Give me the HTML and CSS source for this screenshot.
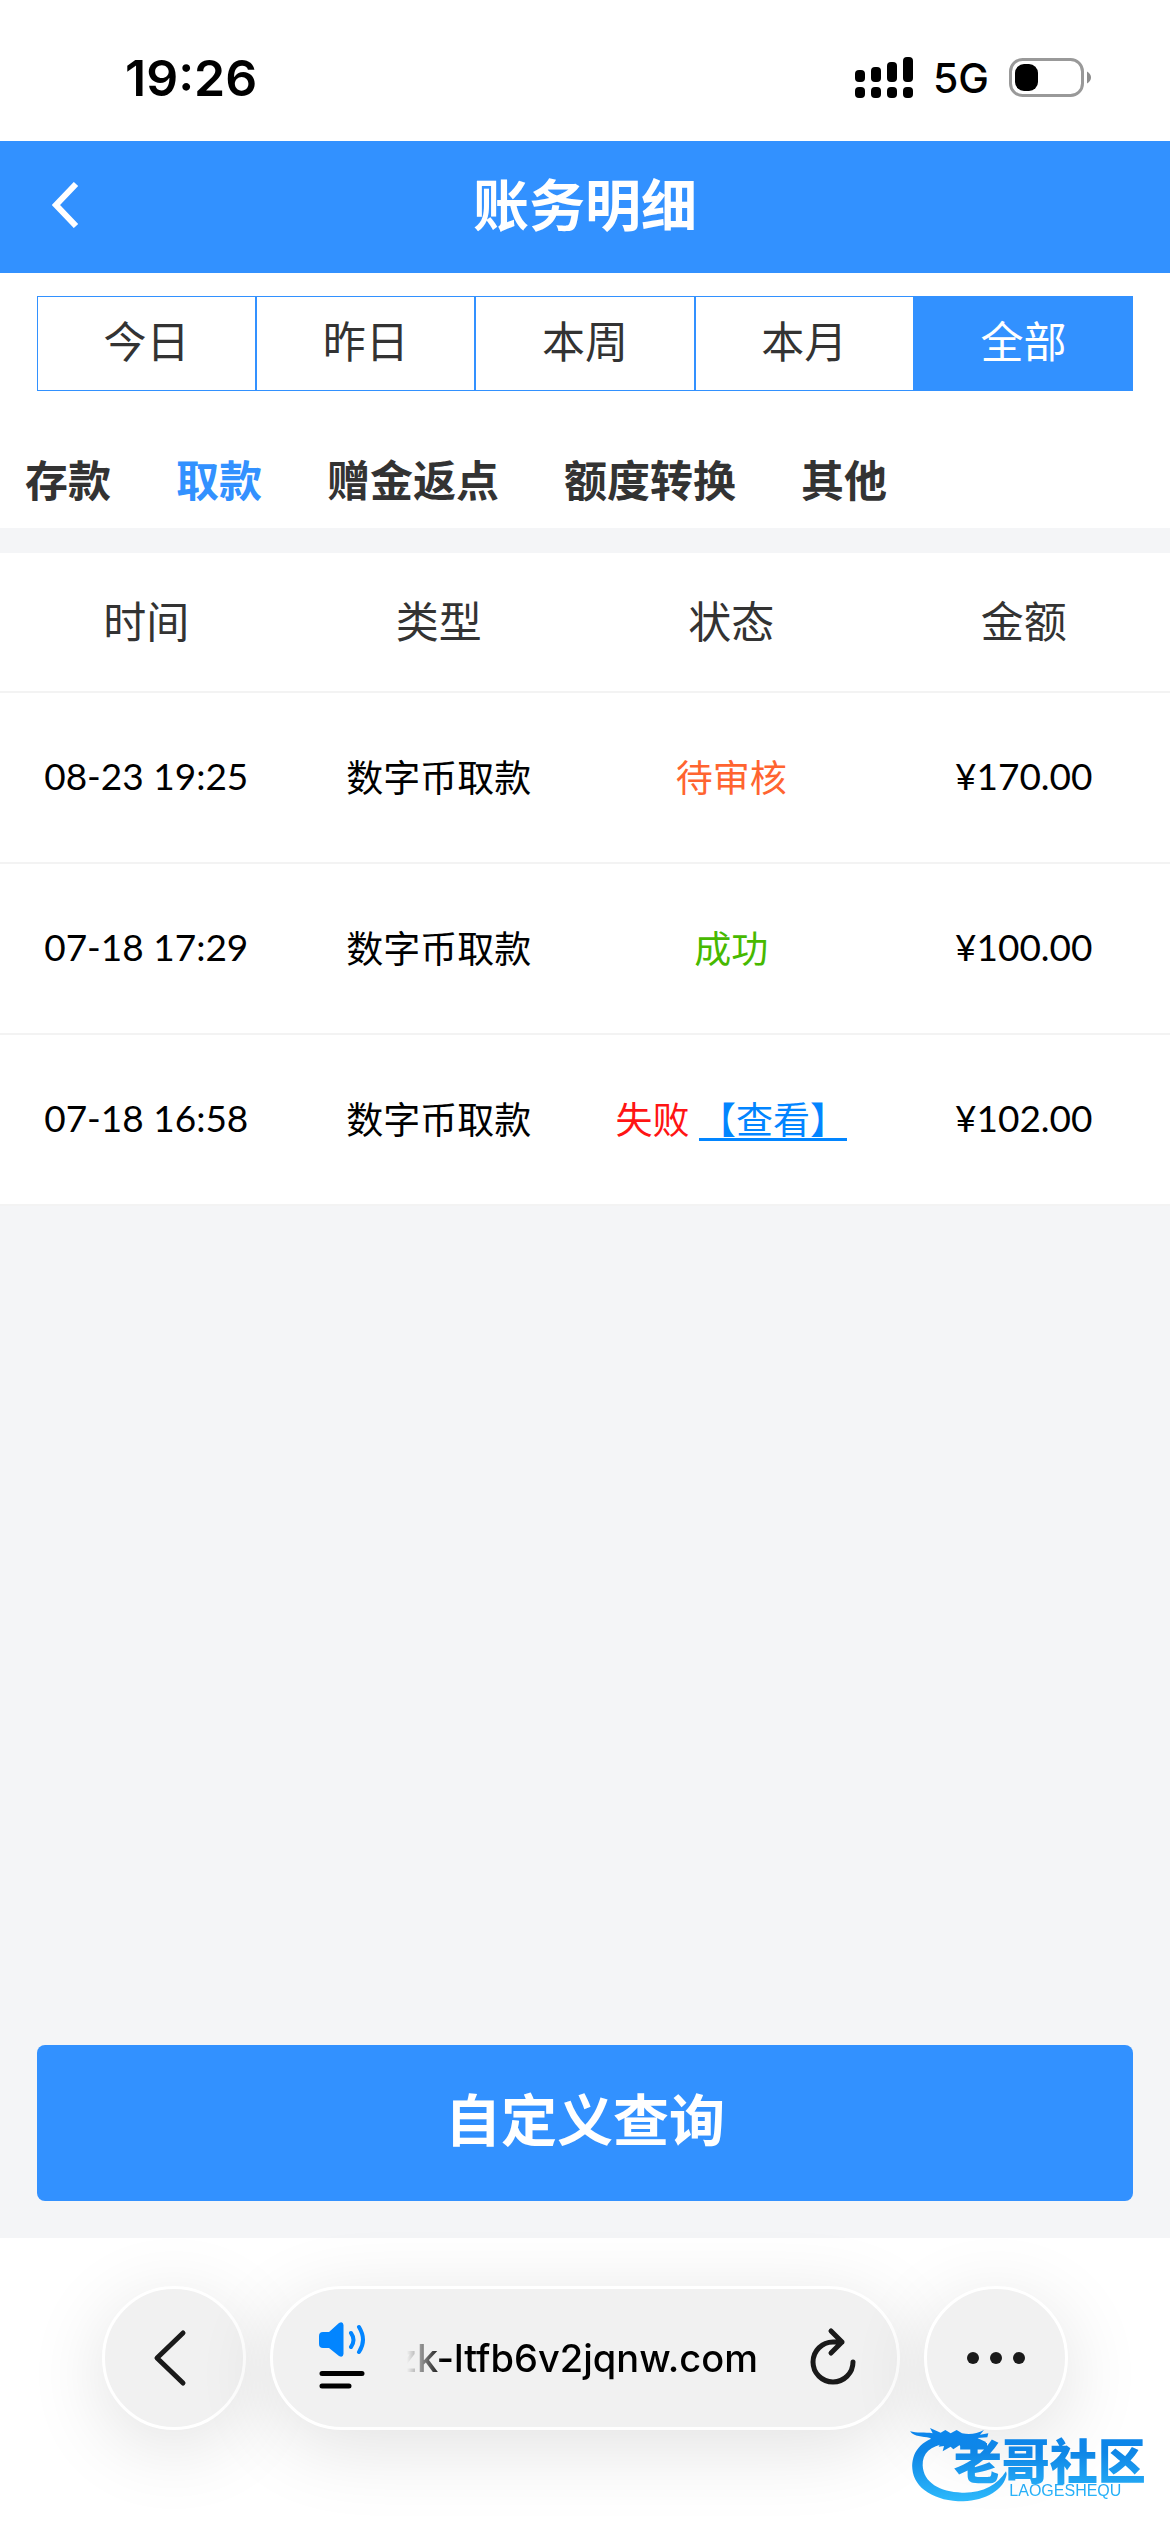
FILE: index.html
```html
<!DOCTYPE html>
<html lang="zh-CN">
<head>
  <meta charset="UTF-8" />
  <meta name="viewport" content="width=device-width, initial-scale=1.0" />
  <title>账务明细</title>
  <link rel="stylesheet" href="styles.css">
</head>
<body>
  <div class="status-bar">
    <span class="clock">19:26</span>
    <div class="status-icons">
      <svg class="signal" width="58" height="42" viewBox="0 0 58 42">
        <rect x="0" y="13" width="10" height="12" rx="4" />
        <rect x="16" y="10" width="10" height="15" rx="4" />
        <rect x="32" y="5" width="10" height="20" rx="4" />
        <rect x="48" y="0" width="10" height="25" rx="4" />
        <rect x="0" y="30" width="10" height="11" rx="4" />
        <rect x="16" y="30" width="10" height="11" rx="4" />
        <rect x="32" y="30" width="10" height="11" rx="4" />
        <rect x="48" y="30" width="10" height="11" rx="4" />
      </svg>
      <span class="network">5G</span>
      <svg class="battery" width="82" height="40" viewBox="0 0 82 40">
        <rect x="1.5" y="1.5" width="72" height="36" rx="12" fill="none" stroke="#999" stroke-width="3" />
        <rect x="6" y="6" width="23" height="27" rx="9" />
        <path d="M78 13.500 Q82 16 82 19.500 Q82 23 78 25.500 Z" fill="#8c8c8c" />
      </svg>
    </div>
  </div>

  <header class="header">
    <button class="back" aria-label="返回">
      <svg width="30" height="46" viewBox="0 0 30 46"><path d="M24 2 L4 23 L24 44" fill="none" stroke="#fff" stroke-width="6" /></svg>
    </button>
    <h1>账务明细</h1>
  </header>

  <main>
    <div class="filters">
      <div class="ranges">
        <button>今日</button>
        <button>昨日</button>
        <button>本周</button>
        <button>本月</button>
        <button class="active">全部</button>
      </div>
      <nav class="types">
        <a href="#">存款</a>
        <a href="#" class="active">取款</a>
        <a href="#">赠金返点</a>
        <a href="#">额度转换</a>
        <a href="#">其他</a>
      </nav>
    </div>

    <table class="records">
      <thead>
        <tr><th>时间</th><th>类型</th><th>状态</th><th>金额</th></tr>
      </thead>
      <tbody>
        <tr>
          <td>08-23 19:25</td>
          <td>数字币取款</td>
          <td class="pending">待审核</td>
          <td>¥170.00</td>
        </tr>
        <tr>
          <td>07-18 17:29</td>
          <td>数字币取款</td>
          <td class="success">成功</td>
          <td>¥100.00</td>
        </tr>
        <tr>
          <td>07-18 16:58</td>
          <td>数字币取款</td>
          <td class="failed">失败 <a href="#">【查看】</a></td>
          <td>¥102.00</td>
        </tr>
      </tbody>
    </table>

    <button class="query">自定义查询</button>
  </main>

  <footer class="browser-bar">
    <button class="round" aria-label="后退">
      <svg width="44" height="58" viewBox="0 0 44 58"><path d="M31 4 L5 29 L31 54" fill="none" stroke="#1a1a1a" stroke-width="5" stroke-linecap="round" stroke-linejoin="round" /></svg>
    </button>
    <div class="address">
      <button class="page-menu" aria-label="页面菜单">
        <svg width="48" height="72" viewBox="0 0 48 72">
          <path d="M4 10 H10 L20 1 Q24 -1 24.500 3 V32 Q24 36 20 34 L10 26 H4 Q0 26 0 22 V14 Q0 10 4 10 Z" fill="#0285ff" />
          <path d="M32 11 Q37 18 32 25 M40 5 Q48 18 40 30" fill="none" stroke="#0285ff" stroke-width="4" stroke-linecap="round" />
          <path d="M3 51.500 H43 M3 64 H30" fill="none" stroke="#000" stroke-width="5" stroke-linecap="round" />
        </svg>
      </button>
      <button class="url"><span>zk-ltfb6v2jqnw.com</span></button>
      <button class="reload" aria-label="刷新">
        <svg width="46" height="62" viewBox="0 0 46 62">
          <path d="M32 15 H23 A20 20 0 1 0 43 35 M21 4 L32 15 L21 26" fill="none" stroke="#1a1a1a" stroke-width="5" stroke-linecap="round" stroke-linejoin="round" />
        </svg>
      </button>
    </div>
    <button class="round" aria-label="更多">
      <svg width="60" height="12" viewBox="0 0 60 12"><circle cx="7" cy="6" r="6" fill="#1a1a1a" /><circle cx="30" cy="6" r="6" fill="#1a1a1a" /><circle cx="53" cy="6" r="6" fill="#1a1a1a" /></svg>
    </button>
  </footer>

  <svg class="watermark" width="290" height="132" viewBox="0 0 870 396">
    <defs>
      <linearGradient id="blue" gradientUnits="userSpaceOnUse" x1="0" y1="80" x2="0" y2="300">
        <stop offset="0" stop-color="#0b86ee" />
        <stop offset="0.35" stop-color="#0f86e6" />
        <stop offset="1" stop-color="#2cb8fb" />
      </linearGradient>
    </defs>
    <g fill="url(#blue)">
      <!-- dragon body -->
      <path d="M190 106 C120 118 94 160 97 206 C102 266 166 304 250 304 C316 302 374 268 380 222 L378 214 C352 256 306 280 246 278 C180 276 130 248 128 196 C127 160 150 138 200 130 Z" />
      <!-- dragon head -->
      <path d="M90 94 C110 100 134 96 158 100 L150 84 L182 98 L196 90 L212 100 L230 90 L246 100 C270 104 290 102 312 90 L300 104 L325 100 L322 112 L292 114 L318 126 L314 140 L280 132 L262 130 L250 144 L238 136 L220 148 L212 140 L188 154 L192 138 L176 140 L184 124 L160 124 L150 114 C126 108 104 112 90 94 Z" />
      <text class="brand" x="221" y="238">老哥社区</text>
      <text class="brand-latin" x="388" y="288">LAOGESHEQU</text>
    </g>
  </svg>
</body>
</html>
```

FILE: styles.css
```css
* { box-sizing: border-box; }
body { margin: 0; min-height: 100vh; display: flex; flex-direction: column; background: #fff; color: #333; font-family: Lato, "Noto Sans CJK SC", sans-serif; }
button { margin: 0; padding: 0; border: none; background: none; color: inherit; font: inherit; cursor: pointer; }
svg { display: block; }
a { color: inherit; text-decoration: none; }

.status-bar { height: 141px; padding: 14px 79px 0 125px; display: flex; align-items: center; justify-content: space-between; color: #000; font-family: Inter, sans-serif; }
.clock { font-size: 50px; font-weight: 600; }
.status-icons { display: flex; align-items: center; gap: 20px; }
.network { font-size: 41px; font-weight: 500; }

.header { height: 132px; padding: 0 52px 4px; display: grid; grid-template-columns: 60px 1fr 60px; align-items: center; background: #3291ff; color: #fff; }
.header h1 { margin: 0; text-align: center; font-size: 56px; line-height: 80px; font-weight: 700; }

main { flex: 1; display: flex; flex-direction: column; background: #f4f5f7; }
.filters { padding-top: 23px; background: #fff; }
.ranges { margin: 0 37px; display: flex; border: 1px solid #3291ff; }
.ranges button { flex: 1; height: 93px; padding-bottom: 9px; font-size: 43px; }
.ranges button + button { border-left: 2px solid #3291ff; }
.ranges .active { background: #3291ff; color: #fff; }
.types { height: 137px; padding: 44px 25px 0; display: flex; gap: 65px; font-size: 43px; line-height: 92px; font-weight: 700; }
.types .active { color: #3291ff; }

.records { width: 100%; margin-top: 25px; table-layout: fixed; border-collapse: collapse; background: #fff; text-align: center; }
.records th { height: 139px; padding: 0 0 6px; font-size: 43px; font-weight: 400; border-bottom: 2px solid #f3f3f3; }
.records td { height: 171px; padding: 0 0 4px; color: #000; font-size: 37px; white-space: nowrap; border-bottom: 2px solid #f3f3f3; }
.records .pending { color: #ff6430; }
.records .success { color: #47b900; }
.records .failed { color: #ff1414; }
.records .failed a { color: #0285ff; text-decoration: underline; text-decoration-thickness: 3px; text-underline-offset: 4px; text-decoration-skip-ink: none; }

.query { height: 156px; margin: auto 37px 37px; padding-bottom: 14px; border-radius: 8px; background: #3291ff; color: #fff; font-size: 56px; font-weight: 700; }

.browser-bar { height: 294px; padding: 48px 102px 0; display: flex; align-items: flex-start; gap: 24px; font-family: Inter, sans-serif; color: #000; }
.round, .address { height: 144px; display: flex; align-items: center; border: 3px solid #fff; border-radius: 72px; background: #f1f1f1; box-shadow: 0 16px 80px rgba(0, 0, 0, 0.12); }
.round { flex: none; width: 144px; justify-content: center; }
.address { flex: 1; gap: 40px; padding: 0 41px 0 46px; }
.url { width: 351px; overflow: hidden; display: flex; justify-content: flex-end; font-size: 38px; font-weight: 500; line-height: 56px; white-space: nowrap; -webkit-mask-image: linear-gradient(to right, transparent, #000 36px); mask-image: linear-gradient(to right, transparent, #000 36px); }
.reload { margin-left: auto; }

.watermark { position: fixed; right: 0; bottom: 0; }
.brand { font-family: "Noto Sans CJK SC", sans-serif; font-size: 144px; font-weight: 900; }
.brand-latin { font-family: "Liberation Sans", sans-serif; font-size: 48px; }
```
